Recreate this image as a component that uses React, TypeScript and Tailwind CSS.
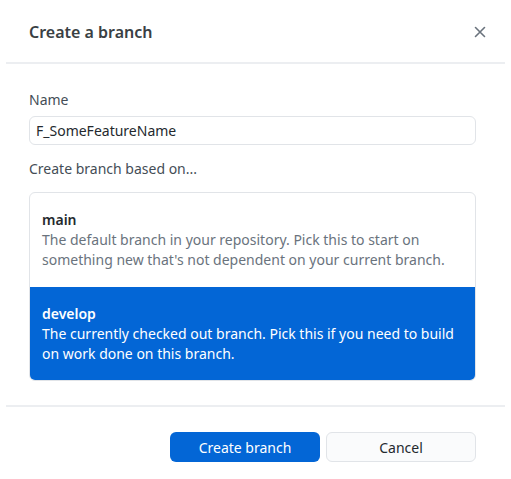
import React from "react";

export default function App() {
  return (
    <div className="w-[511px] h-[479px] bg-white font-['Noto_Sans',sans-serif] text-[#24292e]">
      <div className="flex h-[62px] items-center justify-between pl-[29px] pr-[25px] pt-[1px]">
        <h1 className="text-[16px] font-semibold text-[#3a3f44]">Create a branch</h1>
        <svg width="12" height="12" viewBox="0 0 12 12" className="text-[#6a737d]">
          <path d="M1.5 1.5 L10.5 10.5 M10.5 1.5 L1.5 10.5" stroke="currentColor" strokeWidth="1.6" strokeLinecap="round" />
        </svg>
      </div>
      <div className="mx-[6px] h-[2px] bg-[#eceef1]" />
      <div className="pl-[29px] pr-[35px] pt-[26px]">
        <div className="text-[14px] leading-[20px] text-[#444d56]">Name</div>
        <div className="mt-[6px] flex h-[29px] items-center rounded-[6px] border border-[#e1e4e8] px-[6px] text-[14px] text-[#24292e]">
          F_SomeFeatureName
        </div>
        <div className="mt-[14px] text-[14px] leading-[20px] text-[#444d56]">Create branch based on...</div>
        <div className="mt-[13px] overflow-hidden rounded-[6px] border border-[#e1e4e8]">
          <div className="px-[12px] py-[17px] text-[14px] leading-[20px]">
            <div className="font-semibold text-[#24292e]">main</div>
            <div className="text-[#6a737d]">
              The default branch in your repository. Pick this to start on something new that's not dependent on your current branch.
            </div>
          </div>
          <div className="bg-[#0366d6] px-[12px] pt-[17px] pb-[16px] text-[14px] leading-[20px] text-white">
            <div className="font-semibold">develop</div>
            <div>The currently checked out branch. Pick this if you need to build on work done on this branch.</div>
          </div>
        </div>
      </div>
      <div className="mx-[6px] mt-[24px] h-[2px] bg-[#eceef1]" />
      <div className="flex justify-end gap-[6px] pr-[35px] pt-[25px]">
        <button className="h-[30px] w-[150px] rounded-[6px] bg-[#0366d6] text-[14px] text-white">Create branch</button>
        <button className="h-[30px] w-[150px] rounded-[6px] border border-[#e1e4e8] bg-[#fafbfc] text-[14px] text-[#24292e]">Cancel</button>
      </div>
    </div>
  );
}
